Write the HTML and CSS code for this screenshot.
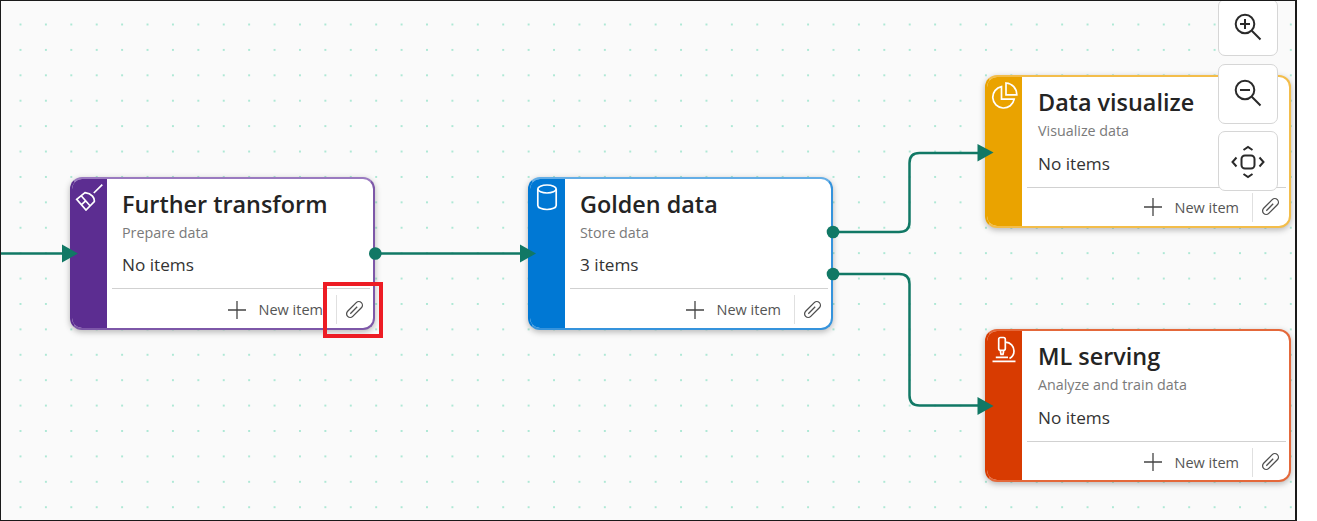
FILE: index.html
```html
<!DOCTYPE html>
<html lang="en">
<head>
<meta charset="utf-8">
<title>Lineage canvas</title>
<link rel="stylesheet" href="styles.css">
</head>
<body>
<svg class="sprite" aria-hidden="true">
  <symbol id="i-plus" viewBox="0 0 20 20"><path d="M10 1V19M1 10H19"/></symbol>
  <symbol id="i-clip" viewBox="0 0 20 20"><path d="M12.250 2.650L3.650 11.250A3.600 3.600 0 0 0 8.750 16.350L17.350 7.750A3.600 3.600 0 0 0 12.250 2.650M6.300 13.700L13.200 6.800"/></symbol>
</svg>
<main class="canvas">
  <section class="card card-purple">
    <div class="band"><svg class="band-icon" viewBox="0 0 28 28"><path d="M27.300 1.700L18.800 10M10 9.700L1.700 16.300L11 27L19.300 18.700C19.800 15 17 10.500 10 9.700ZM6.200 12.800L15 22.700M10.600 17.800L6.800 21.300"/></svg></div>
    <div class="content">
      <div class="info"><h2 class="title">Further transform</h2><p class="sub">Prepare data</p><p class="count">No items</p></div>
      <div class="footer"><span class="new"><svg class="plus"><use href="#i-plus"/></svg>New item</span><span class="attach"><svg class="clip"><use href="#i-clip"/></svg></span></div>
    </div>
  </section>
  <section class="card card-blue">
    <div class="band"><svg class="band-icon" viewBox="0 0 28 28"><ellipse cx="14" cy="6" rx="9.200" ry="4"/><path d="M4.800 6V22.500C4.800 24.700 8.900 26.500 14 26.500C19.100 26.500 23.200 24.700 23.200 22.500V6"/></svg></div>
    <div class="content">
      <div class="info"><h2 class="title">Golden data</h2><p class="sub">Store data</p><p class="count">3 items</p></div>
      <div class="footer"><span class="new"><svg class="plus"><use href="#i-plus"/></svg>New item</span><span class="attach"><svg class="clip"><use href="#i-clip"/></svg></span></div>
    </div>
  </section>
  <section class="card card-yellow">
    <div class="band"><svg class="band-icon" viewBox="0 0 28 28"><path d="M11.500 5.600A10.800 10.800 0 1 0 24.200 18.200H11.500ZM16 2V13.800H26.800C26.800 7.400 22.200 2.400 16 2Z"/></svg></div>
    <div class="content">
      <div class="info"><h2 class="title">Data visualize</h2><p class="sub">Visualize data</p><p class="count">No items</p></div>
      <div class="footer"><span class="new"><svg class="plus"><use href="#i-plus"/></svg>New item</span><span class="attach"><svg class="clip"><use href="#i-clip"/></svg></span></div>
    </div>
  </section>
  <section class="card card-red">
    <div class="band"><svg class="band-icon" viewBox="0 0 28 28"><path d="M10.500 2.500H13.500C14.600 2.500 15.300 3.200 15.300 4.300V13.500C15.300 14.600 14.600 15.300 13.500 15.300H10.500C9.400 15.300 8.700 14.600 8.700 13.500V4.300C8.700 3.200 9.400 2.500 10.500 2.500ZM10.200 15.500L11 19.300H13L13.800 15.500M15.500 7.200C20.500 7.500 24 11 24 16C24 19.200 22.500 21.800 19.500 23.500M2.500 26.300H25.500M5.800 22.300H18"/></svg></div>
    <div class="content">
      <div class="info"><h2 class="title">ML serving</h2><p class="sub">Analyze and train data</p><p class="count">No items</p></div>
      <div class="footer"><span class="new"><svg class="plus"><use href="#i-plus"/></svg>New item</span><span class="attach"><svg class="clip"><use href="#i-clip"/></svg></span></div>
    </div>
  </section>

  <svg class="edges" viewBox="1 1 1295 519">
    <path class="edge" d="M0 253.500H64"/>
    <path class="edge" d="M375 253.500H523"/>
    <path class="edge" d="M833 232H899Q909.500 232 909.500 222V163Q909.500 153 919.500 153H980"/>
    <path class="edge" d="M833 274H899Q909.500 274 909.500 284V395.500Q909.500 405.500 919.500 405.500H980"/>
    <path class="head" d="M62 244.500L78 253.500L62 262.500Z"/>
    <path class="head" d="M520 244.500L536 253.500L520 262.500Z"/>
    <path class="head" d="M977.500 144L993.500 152.500L977.500 161.500Z"/>
    <path class="head" d="M977.500 397L993.500 406L977.500 415Z"/>
    <circle class="port" cx="375.300" cy="253.500" r="6.300"/>
    <circle class="port" cx="833" cy="232" r="6.300"/>
    <circle class="port" cx="833" cy="274" r="6.300"/>
  </svg>

  <div class="highlight"></div>

  <div class="zoom-controls">
    <button class="zoom-btn zoom-btn-top zoom-mag"><svg class="zoom-icon" viewBox="0 0 32 32"><circle cx="13" cy="13" r="9.300"/><path d="M19.800 19.800L28.500 28.500M13 8V18M8 13H18"/></svg></button>
    <button class="zoom-btn zoom-mag"><svg class="zoom-icon" viewBox="0 0 32 32"><circle cx="13" cy="13" r="9.300"/><path d="M19.800 19.800L28.500 28.500M8 13H18"/></svg></button>
    <button class="zoom-btn"><svg class="zoom-icon" viewBox="0 0 32 32"><rect x="9.500" y="10.500" width="13" height="13" rx="3.500"/><path d="M11.500 5L16 2L20.500 5M11.500 29L16 32L20.500 29M4.500 12.500L0.500 17L4.500 21.500M27.500 12.500L31.500 17L27.500 21.500"/></svg></button>
  </div>
</main>
</body>
</html>
```
FILE: styles.css
```css
* { box-sizing: border-box; }
html, body { margin: 0; height: 100%; background: #fff; overflow: hidden; }
body { display: flex; font-family: "Open Sans", "Noto Sans", sans-serif; }
.sprite { display: none; }

.canvas {
  position: relative;
  width: 1297px;
  height: 521px;
  overflow: hidden;
  border: solid #1a1a1a;
  border-width: 1px 2px 1px 1px;
  background-color: #fafafa;
  background-image: radial-gradient(circle at 1px 1px, #aee8d5 0.8px, transparent 0.8px);
  background-size: 25.42px 25.42px;
  background-position: -6.9px -2.9px;
}

.card {
  position: absolute;
  display: flex;
  width: 305px;
  height: 153px;
  border: 2px solid;
  border-radius: 12px;
  overflow: hidden;
  background: #fff;
  box-shadow: 0 2px 6px rgba(0, 0, 0, 0.28);
}
.card-purple { left: 69px; top: 176px; border-color: #9a7ac0; border-right-color: #7d57a8; border-bottom-color: #7d57a8; border-left-color: #5c2d91; --accent: #5c2d91; }
.card-blue { left: 527px; top: 176px; border-color: #64aee6; border-right-color: #3593dc; border-bottom-color: #3593dc; border-left-color: #0078d4; --accent: #0078d4; }
.card-yellow { left: 984px; top: 74px; width: 306px; border-color: #f3bd4a; border-left-color: #eaa300; --accent: #eaa300; }
.card-red { left: 984px; top: 328px; width: 306px; border-color: #e4683a; border-left-color: #d83b01; --accent: #d83b01; }

.band { flex: 0 0 35px; background: var(--accent); display: flex; justify-content: center; align-items: flex-start; padding: 4px 1px 0 0; }
.band-icon { flex: none; width: 28px; height: 28px; fill: none; stroke: #fff; stroke-width: 1.7; }

.content { flex: 1; min-width: 0; display: flex; flex-direction: column; }
.info { flex: 1; padding: 7px 0 0 15px; }
.card-yellow .info, .card-red .info { padding-left: 16px; }
.title { margin: 0; font-size: 23.4px; line-height: 36px; font-weight: 600; color: #242424; white-space: nowrap; }
.sub { margin: 1px 0 0; font-size: 14.3px; line-height: 20px; color: #7a7a7a; }
.count { margin: 10px 0 0; font-size: 17.2px; line-height: 24px; color: #333; }
.card-yellow .count, .card-red .count { margin-top: 11px; }

.footer {
  flex: 0 0 40px;
  margin: 0 3px 0 5px;
  padding-top: 2px;
  border-top: 1px solid #d1d1d1;
  display: flex;
  align-items: center;
  justify-content: flex-end;
}
.card-yellow .footer, .card-red .footer { flex-basis: 39px; }
.card-yellow .footer { padding-top: 0; }
.new { display: flex; align-items: center; gap: 12px; font-size: 14.5px; color: #555; white-space: nowrap; }
.plus { width: 20px; height: 20px; fill: none; stroke: #444; stroke-width: 1.3; }
.attach { flex: 0 0 34px; height: 29px; margin-left: 13px; padding-left: 1px; border-left: 1px solid #e0e0e0; display: flex; align-items: center; justify-content: center; }
.clip { width: 20px; height: 20px; fill: none; stroke: #505050; stroke-width: 1.3; }

.edges { position: absolute; left: 0; top: 0; width: 1295px; height: 519px; }
.edge { fill: none; stroke: #117865; stroke-width: 2.5; }
.head, .port { fill: #117865; }

.highlight { position: absolute; left: 322px; top: 281px; width: 60px; height: 56px; border: 4px solid #ed1c24; }

.zoom-controls { position: absolute; left: 1217px; top: -2px; display: flex; flex-direction: column; gap: 7.5px; }
.zoom-btn {
  flex: none;
  width: 60px;
  height: 60px;
  padding: 0;
  display: flex;
  align-items: center;
  justify-content: center;
  background: #fff;
  border: 1px solid #d6d6d6;
  border-radius: 7px;
}
.zoom-btn-top { height: 57px; }
.zoom-mag { padding-bottom: 1px; }
.zoom-icon { width: 32px; height: 32px; fill: none; stroke: #2a2a2a; stroke-width: 2; overflow: visible; }
```
